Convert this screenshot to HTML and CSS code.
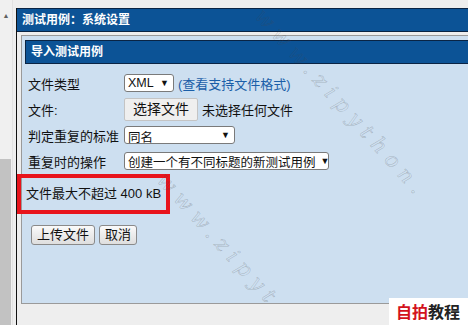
FILE: index.html
```html
<!DOCTYPE html>
<html>

<head>
    <title>导入测试用例</title>
    <meta charset="utf-8">
    <meta name='viewport' content='width=device-width'>
    <link rel="stylesheet" href="styles.css">
</head>

<body>
    <div class="scrollbar">
        <span class="arrow">&#9650;</span>
        <div class="thumb"></div>
    </div>

    <div class="frame">
        <div class="titlebar">测试用例：系统设置</div>

        <div class="panel">
            <div class="panel-head">导入测试用例</div>

            <form class="import-form">
                <div class="row">
                    <label>文件类型</label>
                    <div class="ctrl">
                        <span class="select sel-type">XML <i>&#9660;</i></span>
                        <a class="link" href="#">(查看支持文件格式)</a>
                    </div>
                </div>
                <div class="row">
                    <label>文件:</label>
                    <div class="ctrl">
                        <span class="file-btn">选择文件</span>
                        <span>未选择任何文件</span>
                    </div>
                </div>
                <div class="row">
                    <label>判定重复的标准</label>
                    <div class="ctrl">
                        <span class="select sel-dup"><b>同名</b><i>&#9660;</i></span>
                    </div>
                </div>
                <div class="row">
                    <label>重复时的操作</label>
                    <div class="ctrl">
                        <span class="select sel-act">创建一个有不同标题的新测试用例<i>&#9660;</i></span>
                    </div>
                </div>

                <div class="note">文件最大不超过 400 kB</div>

                <div class="buttons">
                    <span class="btn">上传文件</span>
                    <span class="btn">取消</span>
                </div>
            </form>
        </div>
    </div>

    <!-- watermark -->
    <span class="wm wm1">www.zipython.</span>
    <span class="wm wm2">www.zipyt</span>
    <div class="logo"><span class="red">自拍</span>教程</div>
</body>

</html>
```

FILE: styles.css
```css
html {
    overflow: hidden;
}

body {
    margin: 0;
    height: 325px;
    overflow: hidden;
    display: flex;
    background: #eeeeee;
    font-family: "Liberation Sans", "Noto Sans CJK SC", sans-serif;
    font-size: 13px;
    color: #111;
    position: relative;
}

.scrollbar {
    width: 12px;
    background: #f0f0f0;
    border-right: 1px solid #e2e2e2;
    display: flex;
    flex-direction: column;
    align-items: center;
}
.scrollbar .arrow {
    font-size: 7px;
    color: #606060;
    margin-top: 12px;
}
.scrollbar .thumb {
    margin-top: auto;
    width: 11px;
    height: 166px;
    background: #c2c2c2;
    align-self: flex-start;
}

.frame {
    flex: 1;
    margin: 8px 0 0 3px;
    border-left: 1px solid #111;
}

.titlebar {
    height: 22px;
    line-height: 22px;
    background: #0c5396;
    border-top: 1px solid #0a2444;
    border-bottom: 1px solid #0a2444;
    color: #fff;
    font-weight: bold;
    font-size: 12px;
    padding-left: 5px;
}

.panel {
    margin: 3px 0 0 4px;
    height: 263px;
    border: 1px solid #9a9a9a;
    border-right: none;
    background: #cddff0;
    padding: 4px 0 0 3px;
}

.panel-head {
    height: 22px;
    line-height: 22px;
    background: #0c5396;
    border: 1px solid #0a2444;
    border-right: none;
    color: #fff;
    font-weight: bold;
    font-size: 12px;
    padding-left: 5px;
}

.import-form {
    padding: 6px 0 0 3px;
}

.row {
    display: grid;
    grid-template-columns: 96px auto;
    align-items: center;
    height: 26px;
}
.ctrl {
    display: flex;
    align-items: center;
    gap: 4px;
    white-space: nowrap;
}

.select {
    display: flex;
    align-items: center;
    height: 16px;
    border: 1px solid #7a7a7a;
    border-radius: 3px;
    background: #fff;
    padding: 0 4px 0 3px;
    font-size: 12.5px;
    white-space: nowrap;
}
.select i {
    font-style: normal;
    font-size: 9px;
    margin-left: auto;
    padding-left: 5px;
}
.select b {
    font-weight: normal;
    padding-top: 3px;
}
.sel-type { width: 41px; }
.sel-dup { width: 102px; }
.sel-act { width: 196px; }

.link {
    color: #1a5ea8;
    text-decoration: none;
}

.file-btn {
    height: 21px;
    line-height: 21px;
    padding: 0 8px;
    background: #efefef;
    border: 1px solid #c4c4c4;
    border-radius: 2px;
    font-size: 14px;
}

.note {
    width: 140px;
    margin: 0 0 0 -11px;
    border: 4px solid #e8141c;
    padding: 8px 0 8px 5px;
    line-height: 16px;
}

.buttons {
    display: flex;
    gap: 4px;
    margin: 11px 0 0 3px;
}
.btn {
    height: 18px;
    line-height: 18px;
    padding: 0 5px;
    border: 1px solid #8a8a8a;
    border-radius: 3px;
    background: linear-gradient(#fafafa, #dedede);
}

.wm {
    position: absolute;
    font-family: "DejaVu Serif", serif;
    font-style: italic;
    font-size: 21px;
    letter-spacing: 7px;
    white-space: nowrap;
    color: transparent;
    -webkit-text-stroke: 0.5px rgba(70, 70, 70, 0.3);
    transform: rotate(48deg);
    transform-origin: left top;
    pointer-events: none;
}
.wm1 { left: 268px; top: 4px; }
.wm2 { left: 170px; top: 168px; }

.logo {
    position: absolute;
    right: 0;
    bottom: 0;
    width: 72px;
    height: 27px;
    padding-left: 7px;
    background: #fff;
    line-height: 27px;
    font-family: "Noto Sans CJK SC", sans-serif;
    font-weight: bold;
    font-size: 16px;
    color: #222;
}
.logo .red { color: #d3121c; }
```
